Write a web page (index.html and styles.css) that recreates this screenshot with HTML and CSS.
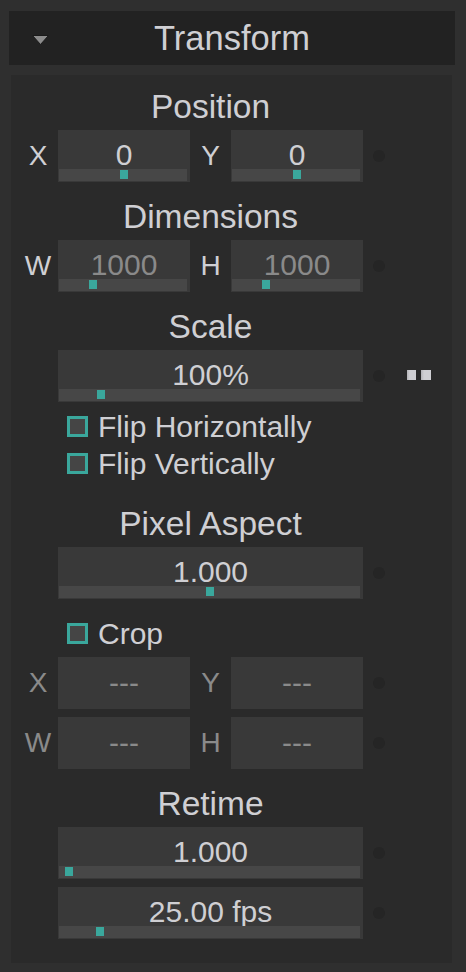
FILE: index.html
```html
<!DOCTYPE html>
<html>
<head>
<meta charset="utf-8">
<link rel="stylesheet" href="styles.css">
</head>
<body>
<div class="header">
  <svg class="caret" width="17" height="10" viewBox="0 0 17 10"><path d="M0.5 0.5 H16.5 L8.5 9.5 Z" fill="#8c8c8c" stroke="#1a1a1a" stroke-width="1"/></svg>
  <div class="title">Transform</div>
</div>
<div class="panel">
  <div class="heading">Position</div>
  <div class="row">
    <div class="lbl">X</div>
    <div class="field"><div class="val">0</div><div class="track"><div class="handle" style="left:61px"></div></div></div>
    <div class="lbl">Y</div>
    <div class="field"><div class="val">0</div><div class="track"><div class="handle" style="left:61px"></div></div></div>
    <div class="dot"></div>
  </div>

  <div class="heading gap15">Dimensions</div>
  <div class="row">
    <div class="lbl">W</div>
    <div class="field"><div class="val dim">1000</div><div class="track"><div class="handle" style="left:30px"></div></div></div>
    <div class="lbl">H</div>
    <div class="field"><div class="val dim">1000</div><div class="track"><div class="handle" style="left:30px"></div></div></div>
    <div class="dot"></div>
  </div>

  <div class="heading gap15">Scale</div>
  <div class="row">
    <div class="field wide"><div class="val">100%</div><div class="track"><div class="handle" style="left:38px"></div></div></div>
    <div class="dot"></div>
    <div class="squares"><span class="sq"></span><span class="sq sq2"></span></div>
  </div>

  <div class="check gap14"><span class="box"></span><span class="ctext">Flip Horizontally</span></div>
  <div class="check gap16"><span class="box"></span><span class="ctext">Flip Vertically</span></div>

  <div class="heading gap30">Pixel Aspect</div>
  <div class="row">
    <div class="field wide"><div class="val">1.000</div><div class="track"><div class="handle" style="left:147px"></div></div></div>
    <div class="dot"></div>
  </div>

  <div class="check gap24"><span class="box"></span><span class="ctext">Crop</span></div>

  <div class="row gap13">
    <div class="lbl dim">X</div>
    <div class="field plain"><div class="dash">---</div></div>
    <div class="lbl dim">Y</div>
    <div class="field plain"><div class="dash">---</div></div>
    <div class="dot"></div>
  </div>
  <div class="row gap8">
    <div class="lbl dim">W</div>
    <div class="field plain"><div class="dash">---</div></div>
    <div class="lbl dim">H</div>
    <div class="field plain"><div class="dash">---</div></div>
    <div class="dot"></div>
  </div>

  <div class="heading gap15">Retime</div>
  <div class="row">
    <div class="field wide"><div class="val">1.000</div><div class="track"><div class="handle" style="left:6px"></div></div></div>
    <div class="dot"></div>
  </div>
  <div class="row gap8">
    <div class="field wide"><div class="val">25.00 fps</div><div class="track"><div class="handle" style="left:37px"></div></div></div>
    <div class="dot"></div>
  </div>
</div>
</body>
</html>
```
FILE: styles.css
```css
html, body {
  margin: 0;
  padding: 0;
  background: #2f2f2f;
  font-family: "Liberation Sans", Arial, sans-serif;
  color: #cfcfd3;
}
body {
  width: 466px;
  height: 972px;
  overflow: hidden;
}
.header {
  margin: 11px 11px 0 9px;
  height: 54px;
  background: #222222;
  display: flex;
  align-items: center;
}
.caret {
  margin-left: 23px;
  margin-top: 3px;
  flex: 0 0 auto;
}
.title {
  flex: 1;
  text-align: center;
  padding-right: 40px;
  font-size: 34.5px;
  line-height: 54px;
}
.panel {
  margin: 10px 14px 0 11px;
  background: #2a2a2a;
  padding: 12px 0 24px;
}
.heading {
  margin-left: 47px;
  width: 305px;
  text-align: center;
  font-size: 33.5px;
  line-height: 40px;
  height: 40px;
  margin-bottom: 3px;
  white-space: nowrap;
}
.gap15 { margin-top: 15px; }
.gap14 { margin-top: 14px; }
.gap16 { margin-top: 16px; }
.gap30 { margin-top: 30px; }
.gap24 { margin-top: 24px; }
.gap13 { margin-top: 13px; }
.gap8 { margin-top: 8px; }
.row {
  display: grid;
  grid-template-columns: 47px 132px 41px 132px 10px 12px 22px 26px;
  align-items: center;
  height: 52px;
}
.lbl {
  font-size: 28px;
  text-align: center;
  line-height: 52px;
}
.lbl:first-child {
  padding-left: 7px;
}
.dim { color: #8a8a8a; }
.field {
  height: 52px;
  background: #393939;
  display: flex;
  flex-direction: column;
  overflow: hidden;
}
.field.wide {
  grid-column: 2 / 5;
}
.val {
  height: 39px;
  padding-top: 10px;
  box-sizing: border-box;
  line-height: 29px;
  font-size: 30px;
  text-align: center;
  white-space: nowrap;
}
.val.dim { color: #8a8a8a; }
.track {
  height: 12px;
  margin: 0 3px 1px 1px;
  background: #474747;
  position: relative;
}
.handle {
  position: absolute;
  top: 1px;
  width: 8px;
  height: 9px;
  background: #3aa79c;
}
.dash {
  line-height: 52px;
  font-size: 30px;
  text-align: center;
  color: #8a8a8a;
}
.dot {
  grid-column: 6;
  width: 12px;
  height: 12px;
  border-radius: 50%;
  background: #252525;
}
.squares {
  grid-column: 8;
  display: flex;
  gap: 5px;
  margin-top: -2px;
}
.sq {
  width: 9px;
  height: 10px;
  background: linear-gradient(to right, #b4b4b8, #cfcfd3 30%);
}
.sq2 {
  width: 10px;
}
.check {
  display: flex;
  align-items: center;
  height: 21px;
  padding-left: 56px;
}
.box {
  width: 21px;
  height: 21px;
  box-sizing: border-box;
  border: 3px solid #3aa79c;
  background: #454545;
  flex: 0 0 auto;
}
.ctext {
  margin-left: 10px;
  font-size: 30px;
  line-height: 21px;
  white-space: nowrap;
}
```
